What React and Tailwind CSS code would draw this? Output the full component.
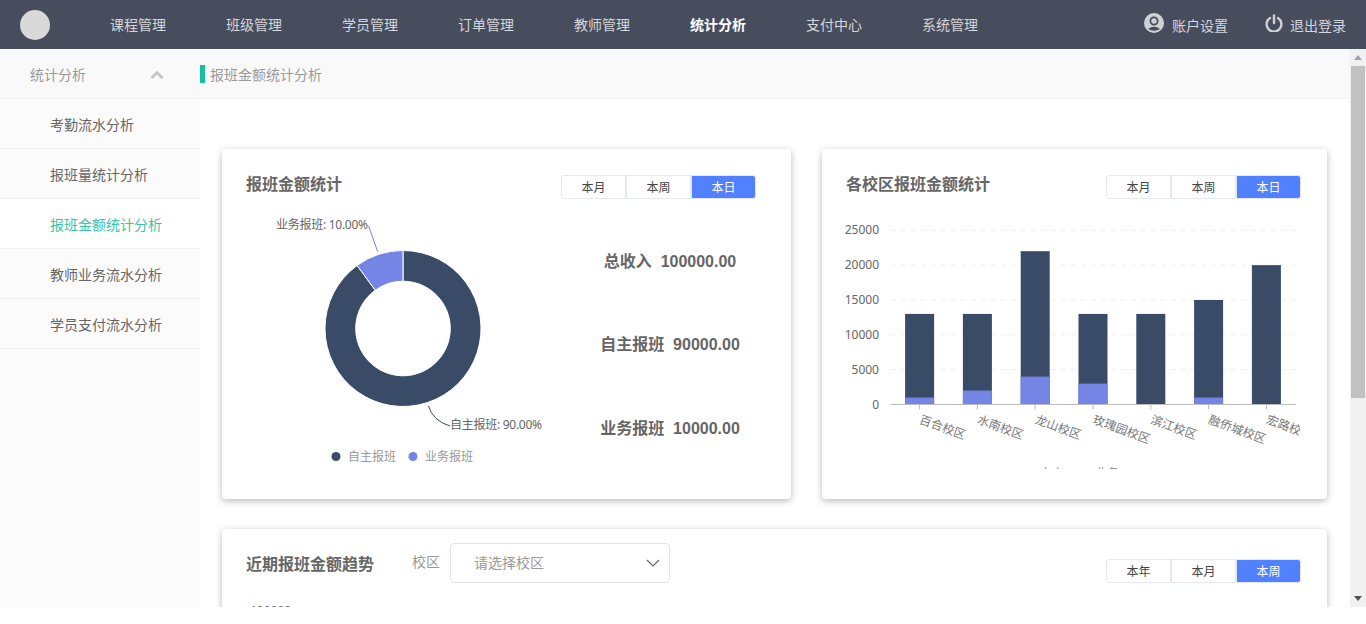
import { useState } from 'react';

const NAV = ['课程管理', '班级管理', '学员管理', '订单管理', '教师管理', '统计分析', '支付中心', '系统管理'];
const SIDE = ['考勤流水分析', '报班量统计分析', '报班金额统计分析', '教师业务流水分析', '学员支付流水分析'];
const BARS = [
  { name: '百合校区', total: 13000, blue: 1000 },
  { name: '水南校区', total: 13000, blue: 2000 },
  { name: '龙山校区', total: 22000, blue: 4000 },
  { name: '玫瑰园校区', total: 13000, blue: 3000 },
  { name: '滨江校区', total: 13000, blue: 0 },
  { name: '融侨城校区', total: 15000, blue: 1000 },
  { name: '宏路校区', total: 20000, blue: 0 },
];
const NAVY = '#3a4b68';
const BLUE = '#7585e5';

function Tabs({ items }) {
  const [active, setActive] = useState(items.length - 1);
  return (
    <div className="flex">
      {items.map((t, i) => (
        <button
          key={t}
          onClick={() => setActive(i)}
          className={`w-[65px] h-6 border border-[#e6e8ef] pt-px text-[12px] leading-[22px] first:rounded-l-[3px] last:rounded-r-[3px] ${
            i === active ? 'bg-[#5181ff] text-white' : 'bg-white text-[#444]'
          }`}
        >
          {t}
        </button>
      ))}
    </div>
  );
}

function arc(cx, cy, r, r0, from, to, large) {
  const pt = (rad, a) => `${cx + rad * Math.sin(a)} ${cy - rad * Math.cos(a)}`;
  return `M${pt(r, from)} A${r} ${r} 0 ${large} 1 ${pt(r, to)} L${pt(r0, to)} A${r0} ${r0} 0 ${large} 0 ${pt(r0, from)} Z`;
}

function Donut() {
  const cut = (-36 * Math.PI) / 180;
  return (
    <svg width="328" height="260" className="ml-[10px] shrink-0">
      <path d={arc(171, 119.5, 78, 47.3, 0, 2 * Math.PI + cut, 1)} fill={NAVY} stroke="#fff" strokeWidth="1" />
      <path d={arc(171, 119.5, 78, 47.3, cut, 0, 0)} fill={BLUE} stroke="#fff" strokeWidth="1" />
      <path d="M145.7 42.7 L137 18 Q136.5 17 135 16.5" fill="none" stroke={BLUE} />
      <path d="M196.3 196.7 Q201 212 218 217" fill="none" stroke={NAVY} />
      <text x="136" y="20" textAnchor="end" fontSize="12" fill="#666" textLength="92">业务报班: 10.00%</text>
      <text x="218" y="220" fontSize="12" fill="#666" textLength="92">自主报班: 90.00%</text>
      <circle cx="104" cy="247.5" r="4.5" fill={NAVY} />
      <text x="116" y="252" fontSize="12" fill="#999">自主报班</text>
      <circle cx="181" cy="247.5" r="4.5" fill={BLUE} />
      <text x="193" y="252" fontSize="12" fill="#999">业务报班</text>
    </svg>
  );
}

function BarChart() {
  const zero = 195.5;
  const perUnit = 174.2 / 25000;
  const left = 58.7;
  const step = 57.8;
  return (
    <svg width="468" height="260" className="ml-[10px] block">
      {[0, 5000, 10000, 15000, 20000, 25000].map((v) => {
        const y = zero - v * perUnit;
        return (
          <g key={v}>
            {v > 0 && <line x1={left} x2="464" y1={y} y2={y} stroke="#eee" strokeDasharray="5 5" />}
            <text x="47" y={y + 4} textAnchor="end" fontSize="12" fill="#666">{v}</text>
          </g>
        );
      })}
      {BARS.map((b, i) => {
        const cx = left + step * (i + 0.5);
        const h = b.total * perUnit;
        const hb = b.blue * perUnit;
        return (
          <g key={b.name}>
            <rect x={cx - 14.5} y={zero - h} width="29" height={h} fill={NAVY} />
            {b.blue > 0 && <rect x={cx - 14.5} y={zero - hb} width="29" height={hb} fill={BLUE} />}
            <line x1={cx} x2={cx} y1={zero} y2={zero + 5} stroke="#bbb" />
            <text transform={`translate(${cx - 1} 214) rotate(20)`} fontSize="12" fill="#777">{b.name}</text>
          </g>
        );
      })}
      <line x1={left} x2="464" y1={zero} y2={zero} stroke="#bbb" />
      <text x="208" y="268.5" fontSize="12" fill="#888">自主</text>
      <text x="263" y="268.5" fontSize="12" fill="#888">业务</text>
    </svg>
  );
}

function Stat({ label, value, className }) {
  return (
    <div className={`h-6 leading-6 text-center text-[16px] font-bold text-[#666] font-['Liberation_Sans','Noto_Sans_CJK_SC',sans-serif] ${className}`}>
      {label}&nbsp;&nbsp;{value}
    </div>
  );
}

function Card({ title, tabs, tabsRight, className, children }) {
  return (
    <div className={`rounded bg-white pb-[30px] pt-[26px] shadow-[0_2px_7px_rgba(0,0,0,0.28)] ${className}`}>
      <div className={`flex items-start justify-between pl-6 ${tabsRight}`}>
        <div className="text-[16px] font-bold leading-[18px] text-[#666]">{title}</div>
        <Tabs items={tabs} />
      </div>
      <div className="mt-[10px]">{children}</div>
    </div>
  );
}

function Scrollbar() {
  return (
    <div className="flex w-4 shrink-0 flex-col items-center bg-[#f1f1f1]">
      <div className="flex h-[17px] w-full items-center justify-center">
        <div className="h-0 w-0 border-x-[4px] border-b-[5px] border-x-transparent border-b-[#a3a3a3]" />
      </div>
      <div className="h-[332px] w-[14px] bg-[#c1c1c1]" />
      <div className="flex-1" />
      <div className="flex h-[17px] w-full items-center justify-center">
        <div className="h-0 w-0 border-x-[4px] border-t-[5px] border-x-transparent border-t-[#505050]" />
      </div>
    </div>
  );
}

export default function App() {
  return (
    <div className="h-[624px] w-full overflow-hidden bg-white font-['Noto_Sans','Noto_Sans_CJK_SC',sans-serif]">
      {/* top nav */}
      <header className="flex h-[49px] items-center bg-[#484d5e] pl-5 text-[14px] text-[#d5d6da]">
        <div className="h-[30px] w-[30px] rounded-full bg-[#d9d9d9]" />
        <nav className="ml-[60px] flex gap-[60px]">
          {NAV.map((n) => (
            <a key={n} className={n === '统计分析' ? 'font-semibold text-white' : ''}>{n}</a>
          ))}
        </nav>
        <div className="ml-auto flex items-center">
          <svg width="20" height="20" viewBox="0 0 20 20" className="-mt-[3px]">
            <circle cx="10" cy="10" r="10" fill="#d0d1d4" />
            <circle cx="10" cy="8" r="3.6" fill="none" stroke="#484d5e" strokeWidth="1.8" />
            <path d="M4 16 Q10 11.5 16 16 Q10 19.5 4 16 Z" fill="#484d5e" />
          </svg>
          <span className="ml-2 mt-[1px]">账户设置</span>
          <svg width="18" height="18" viewBox="0 0 18 18" className="-mt-[3px] ml-[37px]" fill="none" stroke="#d0d1d4" strokeWidth="2.4" strokeLinecap="round">
            <path d="M5 4 A7.4 7.4 0 1 0 13 4" />
            <path d="M9 1.5 V9" />
          </svg>
          <span className="ml-[7px] mr-5 mt-[1px]">退出登录</span>
        </div>
      </header>

      <div className="flex h-[558px] overflow-hidden">
        {/* sidebar */}
        <aside className="w-[200px] shrink-0 bg-[#fbfbfb] text-[14px]">
          <div className="flex h-[50px] items-center justify-between border-b border-[#f0f0f0] bg-[#f9f9f9] pl-[30px] pr-9 pt-px text-[#999]">
            <span>统计分析</span>
            <svg width="14" height="9" viewBox="0 0 14 9" fill="none" stroke="#c4c4c4" strokeWidth="2.6">
              <path d="M1.5 8 L7 2.5 L12.5 8" />
            </svg>
          </div>
          {SIDE.map((s) => (
            <div
              key={s}
              className={`flex h-[50px] items-center border-b border-[#f0f0f0] pl-[50px] pt-[2px] ${
                s === '报班金额统计分析' ? 'bg-white text-[#3cc3a6]' : 'text-[#666]'
              }`}
            >
              {s}
            </div>
          ))}
        </aside>

        {/* main */}
        <main className="flex min-w-0 flex-1 flex-col">
          <div className="flex h-[50px] shrink-0 items-center border-b border-[#f3f3f3] bg-[#f9f9f9] text-[14px] text-[#999]">
            <div className="h-[18px] w-[5px] bg-[#14c39e]" />
            <span className="ml-[5px] pt-px">报班金额统计分析</span>
          </div>
          <div className="pl-[22px] pr-[23px] pt-[50px]">
            <div className="flex gap-[31px]">
              <Card title="报班金额统计" tabs={['本月', '本周', '本日']} tabsRight="pr-[35px]" className="w-[569px]">
                <div className="flex">
                  <Donut />
                  <div className="w-[220px] pt-[41px]">
                    <Stat label="总收入" value="100000.00" />
                    <Stat label="自主报班" value="90000.00" className="mt-[59px]" />
                    <Stat label="业务报班" value="10000.00" className="mt-[60px]" />
                  </div>
                </div>
              </Card>
              <Card title="各校区报班金额统计" tabs={['本月', '本周', '本日']} tabsRight="pr-[26px]" className="w-[505px]">
                <BarChart />
              </Card>
            </div>

            <div className="mt-[30px] h-[300px] rounded bg-white pt-[14px] shadow-[0_2px_7px_rgba(0,0,0,0.28)]">
              <div className="flex items-start pl-6 pr-[26px]">
                <div className="mt-3 text-[16px] font-bold leading-[18px] text-[#666]">近期报班金额趋势</div>
                <span className="ml-[38px] mt-[9px] text-[14px] leading-5 text-[#999]">校区</span>
                <div className="ml-[10px] flex h-10 w-[220px] items-center justify-between rounded border border-[#e5e5e5] pb-px pl-[23px] pr-[9px] text-[14px] text-[#999]">
                  <span>请选择校区</span>
                  <svg width="14" height="8" viewBox="0 0 14 8" fill="none" stroke="#666" strokeWidth="1.2">
                    <path d="M1 1 L7 7 L13 1" />
                  </svg>
                </div>
                <div className="ml-auto mt-4">
                  <Tabs items={['本年', '本月', '本周']} />
                </div>
              </div>
              <div className="mt-5 flex items-center pl-[28px] text-[12px] leading-4 text-[#666]">
                <span>100000</span>
                <span className="ml-2 h-px w-[5px] bg-[#ccc]" />
              </div>
            </div>
          </div>
        </main>

        <Scrollbar />
      </div>
    </div>
  );
}
